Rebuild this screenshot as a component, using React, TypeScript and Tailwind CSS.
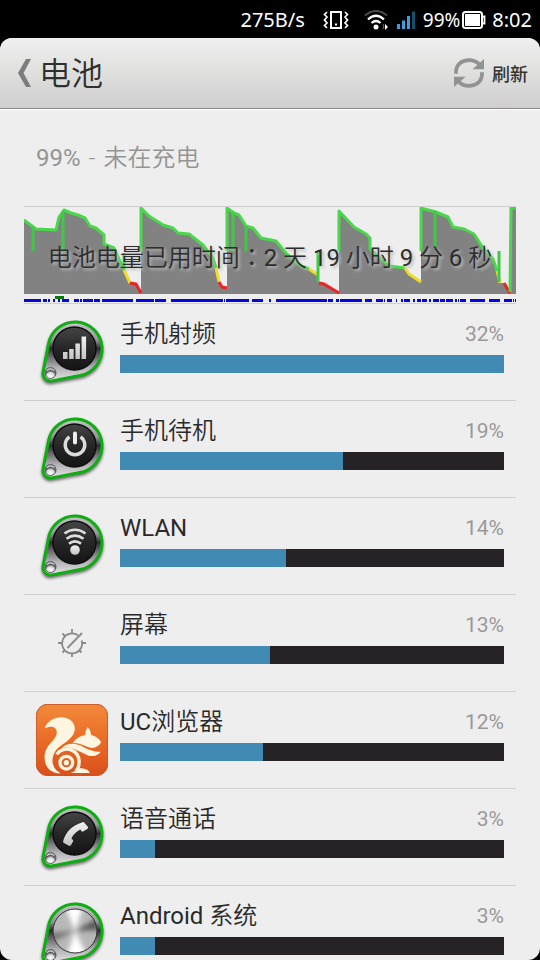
import type { ReactNode } from "react";

type Usage = {
  name: string;
  percent: number;
  // bar length relative to the biggest consumer
  share: number;
  icon: ReactNode;
};

const PEAK_SEGMENTS = [
  {
    green: "0,14 4,17 12,23 32,24 35,11 40,4 47,7 54,9 61,12 66,20 72,22 80,29 80,38 90,42 100,64",
    yellow: "100,64 106,77",
    red: "106,77 112,78 117,87",
  },
  {
    green: "117,45 117,2 125,10 139,19 149,22 154,27 165,28 179,39 189,52 192,62",
    yellow: "192,62 195,76",
    red: "195,76 198,81 203,82",
  },
  {
    green: "203,45 203,2 210,7 215,9 222,20 229,22 237,32 252,35 262,47 275,59 285,63",
    yellow: "285,63 294,69",
    red: "295,77 300,78 315,87",
  },
  {
    green: "315,45 315,5 330,21 342,28 346,32 346,43 357,53 365,60 381,62",
    yellow: "381,62 385,68 397,76",
    red: "",
  },
  {
    green: "397,45 397,2 412,6 424,11 429,21 440,23 450,28 459,42 469,53 473,65",
    yellow: "473,65 476,77",
    red: "480,77 486,87",
  },
  { green: "486,86 487,2 492,2", yellow: "", red: "" },
];

const GRAPH_AREA =
  "0,88 0,14 12,23 32,24 35,11 40,4 47,7 54,9 61,12 66,20 72,22 80,29 80,38 90,42 100,64 106,77 112,78 117,87 117,2 125,10 139,19 149,22 154,27 165,28 179,39 189,52 192,62 195,76 198,81 203,82 203,2 210,7 215,9 222,20 229,22 237,32 252,35 262,47 275,59 285,63 295,70 295,77 300,78 315,87 315,5 330,21 342,28 346,32 346,43 357,53 365,60 381,62 385,68 397,76 397,2 412,6 424,11 429,21 440,23 450,28 459,42 469,53 473,65 476,77 480,77 486,87 487,2 492,2 492,88";

// x, top, bottom of the short dips
const SPIKES = [
  [9, 21, 45],
  [39, 5, 45],
  [100, 47, 64],
  [209, 7, 45],
  [222, 20, 45],
  [294, 45, 76],
  [411, 5, 41],
  [475, 45, 76],
];

// start and end of the awake periods
const AWAKE = [
  [0, 17], [19, 23], [24, 26], [29, 31], [34, 36], [38, 45], [50, 55], [56, 58], [59, 69], [70, 76],
  [78, 109], [112, 130], [131, 142], [147, 199], [200, 201], [202, 225], [228, 239], [245, 247],
  [252, 303], [304, 309], [312, 315], [316, 338], [341, 348], [352, 359], [360, 361], [363, 368],
  [372, 373], [377, 379], [380, 386], [389, 391], [393, 397], [398, 403], [405, 407], [409, 415],
  [416, 421], [422, 429], [431, 433], [434, 435], [436, 442], [446, 461], [465, 476], [480, 488],
  [489, 490], [491, 492],
];

function HistoryGraph() {
  return (
    <svg viewBox="0 1 492 96" preserveAspectRatio="none" className="block h-24 w-full" aria-hidden="true">
      <polygon points={GRAPH_AREA} fill="#828282" />
      <g fill="none" strokeWidth="3" strokeLinejoin="round">
        {PEAK_SEGMENTS.map((s) => (
          <g key={s.green}>
            <polyline points={s.green} stroke="#49d84c" />
            <polyline points={s.yellow} stroke="#eedc2c" />
            <polyline points={s.red} stroke="#ea2424" />
          </g>
        ))}
        {SPIKES.map(([x, top, bottom]) => (
          <line key={x} x1={x} x2={x} y1={top} y2={bottom} stroke="#3fc944" />
        ))}
      </g>
      <rect x="31" y="90" width="9" height="3" fill="#087a14" />
      {AWAKE.map(([from, to]) => (
        <rect key={from} x={from} y="93" width={to - from} height="3" fill="#0505e0" />
      ))}
    </svg>
  );
}

const BADGE_OUTLINE = "M12.5 28A27 27 0 1 1 44 59.5L15.9 64.9A7.5 7.5 0 0 1 7.1 56.1Z";

function Badge({ steel = false, children }: { steel?: boolean; children?: ReactNode }) {
  return (
    <svg viewBox="0 0 72 72" className="size-[72px]" aria-hidden="true">
      <defs>
        <linearGradient id="rim" x1="0" y1="0" x2="0" y2="1">
          <stop offset="0" stopColor="#c4c4c8" />
          <stop offset=".3" stopColor="#97979c" />
          <stop offset=".45" stopColor="#2c2c30" />
          <stop offset=".58" stopColor="#66666b" />
          <stop offset=".78" stopColor="#b4b4b8" />
          <stop offset="1" stopColor="#e6e6e8" />
        </linearGradient>
        <linearGradient id="face" x1="0" y1="0" x2="0" y2="1">
          <stop offset="0" stopColor="#454545" />
          <stop offset=".5" stopColor="#262626" />
          <stop offset="1" stopColor="#141414" />
        </linearGradient>
        <linearGradient id="glyph" x1="0" y1="0" x2="0" y2="1">
          <stop offset="0" stopColor="#f2f2f2" />
          <stop offset="1" stopColor="#c4c4c4" />
        </linearGradient>
        <radialGradient id="screw" cx=".5" cy=".8" r=".8">
          <stop offset="0" stopColor="#ffffff" />
          <stop offset=".4" stopColor="#dcdcdc" />
          <stop offset=".65" stopColor="#555555" />
          <stop offset="1" stopColor="#b0b0b0" />
        </radialGradient>
        <filter id="soft" x="-20%" y="-20%" width="140%" height="140%">
          <feGaussianBlur stdDeviation="1.6" />
        </filter>
        <filter id="sheen" x="-20%" y="-20%" width="140%" height="140%">
          <feGaussianBlur stdDeviation="2.4" />
        </filter>
        <clipPath id="disc">
          <circle cx="39" cy="33" r="22" />
        </clipPath>
      </defs>
      <path d={BADGE_OUTLINE} transform="translate(0 2)" fill="#000" stroke="#000" strokeWidth="3" opacity=".55" filter="url(#soft)" />
      <path d={BADGE_OUTLINE} fill="url(#rim)" stroke="#0cae10" strokeWidth="3" />
      {steel ? (
        <g>
          <g clipPath="url(#disc)">
            <circle cx="39" cy="33" r="22" fill="#b8b8b8" />
            <g filter="url(#sheen)">
              <path d="M39 33L28 6L48 6ZM39 33L30 60L52 60Z" fill="#fff" />
              <path d="M39 33L66 17L66 32Z" fill="#5c5c5c" />
              <path d="M39 33L12 35L12 46Z" fill="#767676" />
            </g>
          </g>
          <circle cx="39" cy="33" r="22" fill="none" stroke="#333" strokeWidth="1" />
        </g>
      ) : (
        <circle cx="38.500" cy="32.500" r="21.500" fill="url(#face)" stroke="#0c0c0c" strokeWidth="1.400" />
      )}
      {children}
      <circle cx="14.500" cy="57" r="5.500" fill="url(#screw)" stroke="#5a5a5a" strokeWidth="1" />
      <path d="M11 54.500Q14.500 51.500 18 54.500" fill="none" stroke="#ddd" strokeWidth="1.200" />
    </svg>
  );
}

function SignalIcon() {
  return (
    <Badge>
      <path d="M27 36h4.500v7H27zM33.200 33h4.500v10h-4.500zM39.400 27.500h4.500V43h-4.500zM45.600 20.500h4.500V43h-4.500z" fill="url(#glyph)" />
    </Badge>
  );
}

function PowerIcon() {
  return (
    <Badge>
      <path d="M33.500 23.800A9.800 9.800 0 1 0 44.500 23.800" fill="none" stroke="#dcdcdc" strokeWidth="3.400" />
      <path d="M39 20.500v9" stroke="#ededed" strokeWidth="4" strokeLinecap="round" />
    </Badge>
  );
}

function WifiIcon() {
  return (
    <Badge>
      <g fill="none" stroke="#dedede" strokeWidth="2.600">
        <path d="M28.500 23.500Q39 16 49.500 23.500" />
        <path d="M30.500 28.800Q39 22.500 47.500 28.800" />
        <path d="M33 33.600Q39 29 45 33.600" />
      </g>
      <circle cx="39" cy="40" r="4.800" fill="url(#glyph)" />
    </Badge>
  );
}

function PhoneIcon() {
  return (
    <Badge>
      <path
        d="M46 21.500C47 20.800 47.700 21 48.300 21.800L52 26C52.300 27 51.500 28 50.500 28.500L47 30.500C46 31 45 30 44.500 28.500C40.500 30.500 36.500 34 35.500 38C37 38.500 37.500 39.500 37 40.500L35 44C34.500 45 33.500 45 32.500 44.500L28 42C27 41.500 27 41 27.200 40C29.500 31 37 24 46 21.500Z"
        fill="url(#glyph)"
      />
    </Badge>
  );
}

function ScreenIcon() {
  return (
    <svg viewBox="0 0 72 72" className="size-[72px]" fill="none" stroke="#8a8a8a" strokeWidth="1.800" aria-hidden="true">
      <path d="M42 28.300A10 10 0 1 0 45.700 33.500" />
      <path d="M31.500 41L46 26" />
      <path d="M36 26V22M36 50V46M26 36H22M50 36H46M29 29L26.500 26.500M29 43L26.500 45.500M43 43L45.500 45.500" />
    </svg>
  );
}

function SquirrelIcon() {
  return (
    <svg viewBox="36 9 216 216" className="size-[72px]" aria-hidden="true">
      <defs>
        <linearGradient id="orange" x1="0" y1="0" x2="0" y2="1">
          <stop offset="0" stopColor="#f28a3c" />
          <stop offset=".5" stopColor="#ea6c26" />
          <stop offset="1" stopColor="#d9501c" />
        </linearGradient>
      </defs>
      <rect x="37" y="10" width="214" height="214" rx="34" fill="url(#orange)" stroke="#c8501e" strokeWidth="3" />
      <g fill="#fff6e2">
        <path d="M62 82C70 60 92 48 115 49C140 51 155 68 152 88C149 108 128 122 108 136C90 150 82 172 87 190C91 204 100 212 110 217C90 218 74 208 66 192C56 166 64 142 82 124C96 109 103 94 95 83C88 75 75 76 62 82Z" />
        <path d="M146 126C154 113 168 105 184 102C184 93 186 86 191 79C197 85 201 93 201 102C216 106 228 114 231 124C227 134 218 139 206 141C186 139 170 124 146 126Z" />
        <path d="M112 141C128 126 150 125 168 133C186 142 204 154 230 152C222 163 208 168 194 164C170 156 146 134 112 141Z" />
        <path d="M166 202C184 202 195 207 197 216H140C150 212 158 208 162 202Z" />
      </g>
      <path d="M98 160A37 37 0 0 1 165 186Q165 200 156 210" fill="none" stroke="#fff6e2" strokeWidth="10" />
      <circle cx="127" cy="185" r="19" fill="none" stroke="#fff6e2" strokeWidth="10" />
      <circle cx="127" cy="185" r="8" fill="#fff6e2" />
    </svg>
  );
}

const USAGES: Usage[] = [
  { name: "手机射频", percent: 32, share: 100, icon: <SignalIcon /> },
  { name: "手机待机", percent: 19, share: 58.1, icon: <PowerIcon /> },
  { name: "WLAN", percent: 14, share: 43.2, icon: <WifiIcon /> },
  { name: "屏幕", percent: 13, share: 39.1, icon: <ScreenIcon /> },
  { name: "UC浏览器", percent: 12, share: 37.2, icon: <SquirrelIcon /> },
  { name: "语音通话", percent: 3, share: 9.1, icon: <PhoneIcon /> },
  { name: "Android 系统", percent: 3, share: 9.1, icon: <Badge steel /> },
];

// Latin letters need a heavier weight than the Chinese ones to look even
function MixedText({ text }: { text: string }) {
  return text.split(/([A-Za-z0-9]+)/).map((part, i) =>
    i % 2 ? (
      <span key={i} className="font-normal">
        {part}
      </span>
    ) : (
      part
    ),
  );
}

function StatusBar() {
  return (
    <div className="flex h-[38px] shrink-0 items-center justify-end bg-black pt-0.5 pr-2 font-['Noto_Sans',sans-serif] text-xl text-white">
      <span className="mr-[18px]">275B/s</span>
      <svg viewBox="0 0 26 20" className="mr-[15px] h-5 w-[26px]" fill="none" stroke="#fff" strokeWidth="2" aria-label="振动">
        <rect x="8" y="2" width="10" height="16" strokeWidth="2" />
        <path d="M12 14.500h2" />
        <path d="M4 2L1.500 4.500L4 7L1.500 10L4 13L1.500 15.500L4 18M22 2L24.500 4.500L22 7L24.500 10L22 13L24.500 15.500L22 18" strokeWidth="1.700" />
      </svg>
      <svg viewBox="0 0 24 20" className="mr-[9px] h-5 w-6" fill="none" stroke="#fff" strokeWidth="2" aria-label="WLAN">
        <path d="M1 5.500Q12 -3.500 23 5.500" stroke="#4a4a4a" />
        <path d="M4 9.500Q12 2 20 9.500" strokeWidth="2.200" />
        <path d="M7.500 13Q12 9 16.500 13" strokeWidth="2.200" />
        <circle cx="12" cy="17" r="2.500" fill="#fff" stroke="none" />
        <path d="M19.500 14v5" stroke="#555" strokeWidth="1.500" />
        <path d="M21 14L24 17L21 20Z" fill="#fff" stroke="none" />
      </svg>
      <svg viewBox="0 0 18 18" className="mr-2 size-[18px]" aria-label="信号">
        <path d="M0 13h3v5H0zM5 9.500h3V18H5zM10 5h3v13h-3z" fill="#3a9ee0" />
        <path d="M15 0.500h3V18h-3z" fill="#15506f" />
      </svg>
      <span className="mr-0.5 text-[19px]">99%</span>
      <svg viewBox="0 0 24 18" className="mr-1.5 h-[18px] w-6" fill="none" stroke="#fff" aria-label="电量">
        <rect x="1" y="1" width="19" height="16" rx="2.500" strokeWidth="2" />
        <rect x="3" y="3" width="15" height="12" fill="#fff" stroke="none" />
        <path d="M20 5.500h2.500v7H20" strokeWidth="1.800" />
      </svg>
      <span>8:02</span>
    </div>
  );
}

function Header() {
  return (
    <header className="flex h-[71px] shrink-0 items-center justify-between border-b border-[#8c8a8c] bg-linear-to-b from-[#f1f0f1] via-[#dfdfde] to-[#d0ced0] pr-3 pl-[18px]">
      <button type="button" className="flex items-center gap-2 text-[32px] font-[350] text-[#2f2f2f]">
        <svg viewBox="0 0 13 28" className="h-7 w-[13px]" aria-hidden="true">
          <path d="M8 0H13L5.500 14L13 28H8L0 14Z" fill="#7d7d7d" />
        </svg>
        <h1 className="pt-0.5">电池</h1>
      </button>
      <button type="button" className="flex items-center gap-2 text-lg text-[#333]">
        <svg viewBox="0 0 88 88" className="size-[30px]" aria-hidden="true">
          <g id="half">
            <path d="M6 46V40C6 20 22 6 44 6C56 6 66 10 74 18" fill="none" stroke="#929292" strokeWidth="11" />
            <path d="M88 3V33H54Z" fill="#929292" />
          </g>
          <use href="#half" transform="rotate(180 44 44)" />
        </svg>
        <span className="pt-1 font-medium">刷新</span>
      </button>
    </header>
  );
}

export default function App() {
  return (
    <div className="flex h-screen flex-col overflow-hidden bg-black font-[Roboto,'Noto_Sans_CJK_SC',sans-serif]">
      <StatusBar />
      <div className="flex min-h-0 flex-1 flex-col overflow-hidden rounded-xl bg-[#eeeeee]">
        <Header />
        <main className="min-h-0 flex-1 overflow-y-auto border-t border-white px-6 [scrollbar-width:none]">
          <p className="flex h-24 items-center gap-2 px-3 text-2xl font-[350] text-[#949494]">
            <span className="font-normal">99%</span> <span>-</span> <span>未在充电</span>
          </p>
          <section className="relative border-t border-[#cfcfcf]">
            <HistoryGraph />
            <p className="absolute inset-0 flex items-center justify-center pt-1 text-2xl font-[350] text-[#2d2d2d] [text-shadow:2px_2px_3px_#bbb]">
              <span className="whitespace-nowrap">
                电池电量已用时间<span className="font-['Noto_Sans_CJK_TC',sans-serif]">：</span>
                <MixedText text="2 天 19 小时 9 分 6 秒" />
              </span>
            </p>
          </section>
          <ul>
            {USAGES.map((usage) => (
              <li key={usage.name} className="flex h-[97px] items-start gap-3 border-t border-[#cfcfcf] px-3 pt-3">
                {usage.icon}
                <div className="flex-1">
                  <div className="flex h-[39px] items-start justify-between">
                    <span className="pt-0.5 text-2xl font-[350] text-[#2a2a2a]">
                      <MixedText text={usage.name} />
                    </span>
                    <span className="pt-1 text-[21px]/7 text-[#999]">{usage.percent}%</span>
                  </div>
                  <div className="h-[18px] bg-[#272226]">
                    <div className="h-full bg-[#418ab3]" style={{ width: `${usage.share}%` }} />
                  </div>
                </div>
              </li>
            ))}
          </ul>
        </main>
      </div>
    </div>
  );
}
